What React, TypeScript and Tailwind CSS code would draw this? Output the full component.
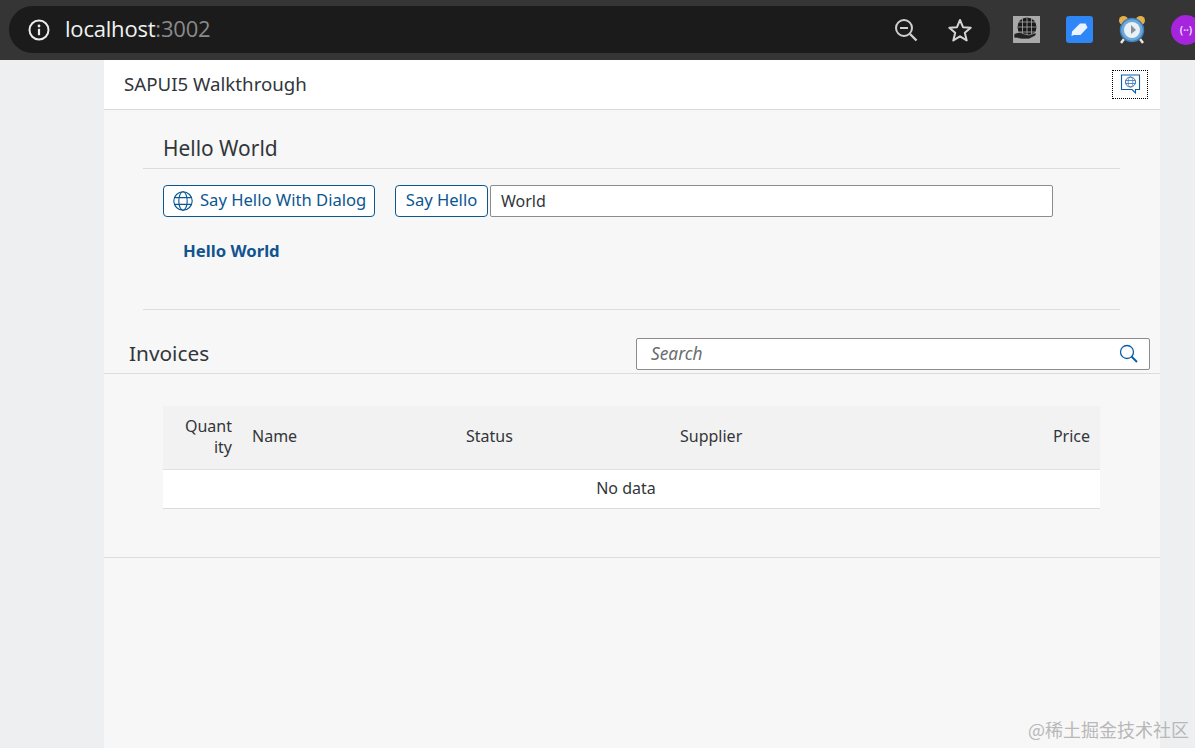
import React from "react";

function Globe({ size = 20, color = "#0a6ed1", className = "" }: { size?: number; color?: string; className?: string }) {
  return (
    <svg width={size} height={size} viewBox="0 0 20 20" fill="none" stroke={color} strokeWidth="1.1" className={className}>
      <circle cx="10" cy="10" r="9.2" />
      <ellipse cx="10" cy="10" rx="4.2" ry="9.2" />
      <path d="M1.600 6.600h16.800M1.600 13.400h16.800" />
    </svg>
  );
}

function Chrome() {
  return (
    <div className="flex h-[60px] shrink-0 items-center bg-[#353535] pb-[1px] pl-[9px] font-['Open_Sans',sans-serif]">
      <div className="flex h-[47px] w-[981px] shrink-0 items-center rounded-full bg-[#1b1b1b] pl-[19px] pr-[17px]">
        <svg width="22" height="22" viewBox="0 0 22 22" fill="none" className="shrink-0">
          <circle cx="11" cy="11" r="9.5" stroke="#ececec" strokeWidth="2" />
          <circle cx="11" cy="7" r="1.4" fill="#ececec" />
          <rect x="9.9" y="9.8" width="2.2" height="6.4" fill="#ececec" />
        </svg>
        <div className="mb-[3px] ml-[15px] text-[22px] leading-none tracking-[-0.2px] text-[#f2f2f2]">
          localhost<span className="text-[#8a8a8a]">:3002</span>
        </div>
        <div className="ml-auto flex items-center gap-[28px]">
          <svg width="26" height="26" viewBox="0 0 26 26" fill="none" stroke="#cfcfcf" strokeWidth="2">
            <circle cx="11" cy="11" r="8" />
            <path d="M7 11h8" />
            <path d="M17 17l6.5 6.5" strokeWidth="2.4" />
          </svg>
          <svg width="26" height="26" viewBox="0 0 26 26" fill="none" stroke="#d4d4d4" strokeWidth="2" strokeLinejoin="round">
            <path d="M13 3l3 7.2 7.7.6-5.900 5 1.900 7.600L13 19.300 6.300 23.400l1.900-7.600-5.900-5 7.700-.6z" />
          </svg>
        </div>
      </div>
      <div className="ml-[23px] flex shrink-0 items-center">
        <svg width="27" height="27" viewBox="0 0 27 27">
          <rect width="27" height="27" fill="#a9a9a9" />
          <circle cx="14" cy="11" r="9.500" fill="#1a1a1a" />
          <path d="M4.500 11h19M14 1.500v19M6 6h16M6 16h16M9.500 2.500v17M18.500 2.500v17" stroke="#a9a9a9" strokeWidth="0.8" />
          <path d="M1 18c4-2 7-2 10 0l5 1 6-2c2 0 1 2 0 3l-6 3H8l-4-1-3 0z" fill="#222" stroke="#bbb" strokeWidth="0.6" />
        </svg>
        <div className="ml-[26px] flex h-[27px] w-[27px] items-center justify-center rounded-[3px] bg-[#2f86f6]">
          <svg width="17" height="15" viewBox="0 0 17 15">
            <path d="M1 9.500L9 1.500h5.500l2 4L9.500 13H3L.5 14z" fill="#eaf3ff" />
          </svg>
        </div>
        <svg width="28" height="30" viewBox="0 0 28 30" className="ml-[25px]">
          <circle cx="5.500" cy="5.500" r="4.500" fill="#e4b04a" />
          <circle cx="22.500" cy="5.500" r="4.500" fill="#e4b04a" />
          <path d="M6 24l-3 4M22 24l3 4" stroke="#e6e6e6" strokeWidth="2.500" />
          <circle cx="14" cy="15" r="11.500" fill="#6fa8d8" stroke="#3e7fb8" strokeWidth="1.500" />
          <circle cx="14" cy="15" r="8" fill="#e8f1f8" />
          <path d="M13 10l5 5-5 4z" fill="#8a8f94" />
        </svg>
        <div className="ml-[25px] flex h-[30px] w-[30px] shrink-0 items-center justify-center rounded-full bg-[#a524dc] text-[10px] font-bold leading-none text-[#f0d8ff]">
          (··)
        </div>
      </div>
    </div>
  );
}

const th = "flex items-center pb-[2px] text-[16px] leading-[21px] text-[#32363a]";

export default function App() {
  return (
    <div className="relative flex h-[748px] w-[1195px] flex-col overflow-hidden bg-[#edeff0] font-['Noto_Sans',sans-serif]">
      <Chrome />
      <div className="ml-[104px] flex w-[1056px] flex-1 flex-col bg-[#f7f7f7] text-[#32363a]">
        <header className="flex h-[50px] shrink-0 items-center justify-between border-b border-[#d9d9d9] bg-white pl-[20px] pr-[12px]">
          <h1 className="text-[18.7px] leading-none">SAPUI5 Walkthrough</h1>
          <button className="flex h-[29px] w-[36px] items-center justify-center border border-dotted border-black">
            <svg width="21" height="21" viewBox="0 0 21 21" fill="none">
              <path d="M1.500 1h18v14.500h-4v3.500l-3.500-3.500H1.500z" stroke="#0a5ea8" strokeWidth="1.100" />
              <circle cx="10.500" cy="8" r="5" stroke="#3a70b0" strokeWidth="1" />
              <ellipse cx="10.500" cy="8" rx="2.300" ry="5" stroke="#3a70b0" strokeWidth="0.700" />
              <path d="M5.500 6.500h10M5.500 9.500h10" stroke="#3a70b0" strokeWidth="0.800" />
            </svg>
          </button>
        </header>

        <section className="ml-[39px] mr-[40px] h-[200px] shrink-0 border-b border-[#dcdcdc]">
          <h2 className="flex h-[59px] items-end border-b border-[#dcdcdc] pb-[7px] pl-[20px] text-[20.9px] leading-[26px]">Hello World</h2>
          <div className="mt-[16px] flex h-[32px] pl-[20px]">
            <button className="flex h-[32px] w-[212px] items-center rounded-[4px] border border-[#0a5792] bg-white pb-[2px] pl-[9px] text-[16.6px] text-[#0a5792]">
              <Globe size={20} color="#0a5792" className="mt-[2px]" />
              <span className="ml-[7px]">Say Hello With Dialog</span>
            </button>
            <button className="ml-[20px] h-[32px] w-[93px] rounded-[4px] border border-[#0a5792] bg-white pb-[2px] text-[16.6px] text-[#0a5792]">Say Hello</button>
            <div className="ml-[2px] flex h-[32px] w-[563px] items-center rounded-[2px] border border-[#8c8c8c] bg-white pl-[10px] text-[16px]">World</div>
          </div>
          <p className="ml-[40px] mt-[23px] text-[16.7px] font-bold leading-[22px] text-[#11548f]">Hello World</p>
        </section>

        <section className="h-[248px] shrink-0 border-b border-[#dcdcdc]">
          <div className="flex h-[64px] items-end justify-between border-b border-[#dcdcdc] pl-[25px] pr-[10px]">
            <h2 className="pb-[7px] text-[20.8px] leading-[26px]">Invoices</h2>
            <div className="mb-[3px] flex h-[32px] w-[514px] items-center justify-between rounded-[2px] border border-[#8c8c8c] bg-white pl-[14px] pr-[10px]">
              <span className="pb-[1px] text-[17.3px] italic text-[#6a6d70]">Search</span>
              <svg width="20" height="20" viewBox="0 0 20 20" fill="none" stroke="#0a5ea8">
                <circle cx="8" cy="8" r="6.500" strokeWidth="1.300" />
                <path d="M12.500 12.500l5.500 5.500" strokeWidth="2" />
              </svg>
            </div>
          </div>
          <div className="ml-[59px] mt-[32px] w-[937px]">
            <div className="flex h-[64px] border-b border-[#e1e1e1] bg-[#f2f2f2]">
              <div className={`${th} w-[69px] justify-end text-right`}>Quant<br />ity</div>
              <div className={`${th} ml-[20px] w-[214px]`}>Name</div>
              <div className={`${th} w-[214px]`}>Status</div>
              <div className={`${th} flex-1`}>Supplier</div>
              <div className={`${th} pr-[10px]`}>Price</div>
            </div>
            <div className="flex h-[39px] items-center justify-center border-b border-[#dcdcdc] bg-white pb-[2px] pr-[11px] text-[16px]">No data</div>
          </div>
        </section>
      </div>
      <div className="absolute bottom-[10px] right-[6px] text-[18px] leading-none text-[#b8b8b8] font-['Noto_Sans_CJK_SC',sans-serif]">@稀土掘金技术社区</div>
    </div>
  );
}
